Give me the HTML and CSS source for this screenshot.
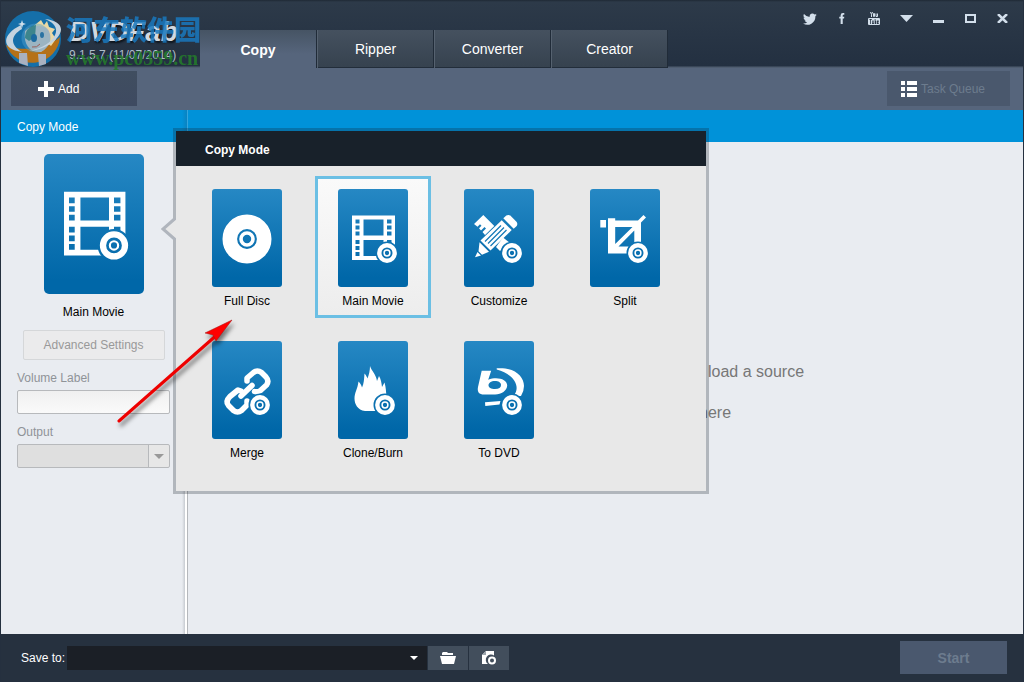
FILE: index.html
```html
<!DOCTYPE html>
<html lang="en">
<head>
<meta charset="utf-8">
<title>DVDFab</title>
<link rel="stylesheet" href="styles.css">
</head>
<body>
<svg class="defs" width="0" height="0" aria-hidden="true">
  <defs>
    <mask id="badge-cut" maskUnits="userSpaceOnUse" x="0" y="0" width="70" height="98">
      <rect width="70" height="98" fill="#fff"/>
      <circle cx="49" cy="64" r="11.5" fill="#000"/>
    </mask>
    <g id="badge" fill="none" stroke="#fff">
      <circle cx="49" cy="64" r="7.7" stroke-width="4.4"/>
      <circle cx="49" cy="64" r="2.900" stroke-width="1.5"/>
    </g>
    <symbol id="i-disc" viewBox="0 0 70 98">
      <g fill="none" stroke="#fff">
        <circle cx="35" cy="50" r="17.2" stroke-width="14.6"/>
        <circle cx="35" cy="50" r="6" stroke-width="3.6"/>
      </g>
    </symbol>
    <symbol id="i-movie" viewBox="0 0 70 98">
      <path mask="url(#badge-cut)" fill="#fff" fill-rule="evenodd" d="M14 26.500h43v44.500H14zM25.500 30.500v16h20v-16zM25.500 51v16h20v-16zM17.500 30.500v4h4v-4zM17.500 36.500v4h4v-4zM17.500 42.500v4h4v-4zM17.500 51v4h4v-4zM17.500 57v4h4v-4zM17.500 63v4h4v-4zM49 30.500v4h4.500v-4zM49 36.500v4h4.500v-4zM49 42.500v4h4.500v-4zM49 51v4h4.500v-4z"/>
      <use href="#badge"/>
    </symbol>
    <symbol id="i-custom" viewBox="0 0 70 98">
      <g transform="translate(-1)">
        <g mask="url(#badge-cut)">
          <path fill="#fff" d="M20.300 26l11 11-9.300 9-2.500-3 3.500-3.500-1.500-1.500-3.500 3.500-2-2.300 2.500-2.500-1.500-1.500-2.500 2.500L11 35z"/>
          <path fill="#fff" d="M40 48.500l7.500 6-10.500 7.500-4-4z"/>
          <path fill="#fff" d="M40.300 29.300l3-2.800q2-1.200 4 0l6.400 6.500q1.200 2 0 4l-3 2.800z"/>
          <path fill="#fff" d="M38.700 31.200l10 9.900L27.500 61.500 17.500 51.500z"/>
          <path fill="#fff" d="M16.500 53.200l9.500 9.500-7 3-3.500-3.500zM14.500 63l3.500 3.500-6 1.700z"/>
          <path fill="none" stroke="#1478b7" stroke-width="1.200" d="M38 36.500L22 52.500M41 38.500L25 54.500M43.500 41L27.500 57"/>
        </g>
        <use href="#badge"/>
      </g>
    </symbol>
    <symbol id="i-split" viewBox="0 0 70 98">
      <g transform="translate(-1)">
        <g mask="url(#badge-cut)" fill="#fff">
          <path d="M11.300 31h5.700v7.500h-5.700z"/>
          <path fill-rule="evenodd" d="M19 29.300h7.200v2.200H52v33H19zM26.200 38v17L43.500 38zM45.300 41.500v16H29.500z"/>
          <path d="M49 31.500l5.500-5.500 2.500 2.500-6 6z"/>
        </g>
        <use href="#badge"/>
      </g>
    </symbol>
    <symbol id="i-merge" viewBox="0 0 70 98">
      <g transform="translate(-1)">
        <g mask="url(#badge-cut)" fill="none" stroke="#fff" stroke-width="5.500" stroke-linejoin="round" stroke-linecap="round">
          <path d="M36 40v-3l6.500-5.500q4-3 8 0l4.500 4.500q3.500 4 .5 8l-6 5.500q-3 2-6 1"/>
          <path d="M30 50l-3-1-8 6.500q-5 5-1.500 9l5 5q4 3 8 0l5.500-5.500v-4"/>
          <path d="M30 55l11-10.500"/>
        </g>
        <use href="#badge"/>
      </g>
    </symbol>
    <symbol id="i-burn" viewBox="0 0 70 98">
      <g transform="translate(-2)">
        <path mask="url(#badge-cut)" fill="#fff" d="M34 25c1.500 5 6 8 7 15l2-5c2 3 2.500 7 3 11l2.500-4.500c1.500 5 1.500 9.500 2 14.500v14H29c-7.500-1-10.500-7-10.500-12.500 0-6 3-9 4-17 2 2 3 4 3.500 6 2-4 2-8 2.500-14 2 2 2.500 4 3 5 1.500-4 2.500-8 2.500-12.500z"/>
        <use href="#badge"/>
      </g>
    </symbol>
    <symbol id="i-todvd" viewBox="0 0 70 98">
      <g transform="translate(-1)">
        <g mask="url(#badge-cut)" fill="#fff">
          <path fill-rule="evenodd" d="M18.700 29.700h9.500l-3 9c9-3.500 19-.5 19 5.800 0 5-6 9-12 9H21c-5 0-7-2.500-6-7.500zM32 40c-4 0-6.500 2-6.500 4.300S28 48 32 48s6-1.500 6-4-2.500-4-6-4z"/>
          <path d="M33.700 27.300C51 26 61 35 61 45q0 5-3 10h-7.500c4-5 4-10 1-15-3-5-9-9-17.800-11.500z"/>
          <path d="M22 61.300l15.500-1.300-1 3.500L22.300 65z"/>
        </g>
        <use href="#badge"/>
      </g>
    </symbol>
  </defs>
</svg>

<div class="window">
  <header class="titlebar">
    <div class="brand">
      <svg class="brand-logo" viewBox="0 0 56 56" aria-hidden="true">
        <circle cx="28" cy="28" r="28" fill="#156fa9"/>
        <path d="M1 34c10 6 38 6 54-8a28 28 0 0 1-54 8z" fill="#b57118"/>
        <path d="M14 42h8l1 13-9-3zM33 43h8v10l-7 2z" fill="#a9b1c0"/>
        <path d="M26 17l10-8 3 5 3-4 2 6 6 2-3 4 4 6-5 7-10-8z" fill="#ead9a4"/>
        <path d="M20 20c6-6 18-7 24-1 3 8 1 17-8 22-10 1-18-6-16-21z" fill="#d9c5b8"/>
        <circle cx="31" cy="27" r="14.500" fill="#4f9fcf" opacity=".45"/>
        <path d="M20 27c0-7 4-12 11-13l-1 12-6 4z" fill="#2c7d84" opacity=".85"/>
        <ellipse cx="29" cy="27" rx="3" ry="4" fill="#1b6aa0"/><ellipse cx="37" cy="24" rx="2" ry="3" fill="#2a72a2"/>
        <path d="M27 36q5 1 8-3" fill="none" stroke="#9c5d58"/>
        <path d="M16 14C-4 24-4 38 17 41 5 34 5 25 17 18zM40 8c16 2 20 10 12 19-6 7-16 12-28 13 14-3 23-9 26-16 3-6 0-12-10-16z" fill="#c4d3df"/>
        <path d="M17 9l1 3 3 1-3 1-1 3-1-3-3-1 3-1z" fill="#cfe0ec"/>
      </svg>
      <div class="brand-text">
        <div class="brand-name">DVDFab</div>
        <div class="brand-version">9.1.5.7 (11/07/2014)</div>
      </div>
      <div class="watermark">
        <div class="watermark-name" lang="zh">河东软件园</div>
        <div class="watermark-url">www.pc0359.cn</div>
      </div>
    </div>
    <nav class="tabs">
      <button class="tab tab-active">Copy</button>
      <button class="tab">Ripper</button>
      <button class="tab">Converter</button>
      <button class="tab">Creator</button>
    </nav>
    <div class="controls">
      <button class="control" aria-label="Twitter"><svg width="14" height="14" viewBox="0 0 24 24"><path fill="currentColor" d="M23.600 4.900a9.700 9.700 0 0 1-2.800.8 4.900 4.900 0 0 0 2.100-2.700 9.700 9.700 0 0 1-3.100 1.200 4.850 4.850 0 0 0-8.300 4.400A13.700 13.700 0 0 1 1.700 3.500a4.850 4.850 0 0 0 1.500 6.500 4.800 4.800 0 0 1-2.200-.6c0 2.300 1.600 4.400 3.900 4.800a4.900 4.900 0 0 1-2.200.1 4.850 4.850 0 0 0 4.500 3.400A9.700 9.700 0 0 1 0 19.700 13.800 13.800 0 0 0 21.200 7.400a9.800 9.800 0 0 0 2.400-2.500z"/></svg></button>
      <button class="control" aria-label="Facebook"><svg width="6" height="11" viewBox="0 0 6 12"><path fill="currentColor" d="M1.500 12V6H0V4h1.500V2.500Q1.500 0 4 0h1.500v2H4.400q-.6 0-.6.700V4h1.700L5.200 6H3.800v6z"/></svg></button>
      <button class="control" aria-label="YouTube"><svg width="12" height="14" viewBox="0 0 12 14"><path fill="none" stroke="currentColor" d="M2.500 0l1 2.500V5M4.500 0l-1 2.500M5.500 1.500h1v3h-1zM8 1.500v3h1.500v-3"/><path fill="currentColor" fill-rule="evenodd" d="M1 6h10q1 0 1 1v5q0 1-1 1H1q-1 0-1-1V7q0-1 1-1zM1.500 7v1h.7v4h.8V8h.7V7zM4 8.500V12h2V8.500h-.6v2.700h-.7V8.500zM6.700 7v5h1.600V8.700h-.8V7zM9 8.500V12h1.700v-1H9.800v-.5h.9v-2z"/></svg></button>
      <button class="control" aria-label="Menu"><svg width="13" height="7" viewBox="0 0 13 7"><path fill="currentColor" d="M0 0h13L6.500 7z"/></svg></button>
      <button class="control control-min" aria-label="Minimize"><svg width="11" height="3" viewBox="0 0 11 3"><path fill="currentColor" d="M0 0h11v3H0z"/></svg></button>
      <button class="control" aria-label="Maximize"><svg width="11" height="9" viewBox="0 0 11 9"><path fill="none" stroke="currentColor" stroke-width="2" d="M1 1h9v7H1z"/></svg></button>
      <button class="control" aria-label="Close"><svg width="11" height="9" viewBox="0 0 11 9"><path fill="none" stroke="currentColor" stroke-width="2.500" d="M1 0l9 9M10 0L1 9"/></svg></button>
    </div>
  </header>

  <div class="toolbar">
    <button class="tool tool-add"><svg width="16" height="16" viewBox="0 0 16 16"><path fill="#fff" d="M6 0h4v6h6v4h-6v6H6v-6H0V6h6z"/></svg>Add</button>
    <button class="tool tool-queue" disabled><svg width="16" height="16" viewBox="0 0 16 16"><path fill="#fff" d="M0 0h4v4H0zM6 0h10v4H6zM0 6h4v4H0zM6 6h10v4H6zM0 12h4v4H0zM6 12h10v4H6z"/></svg>Task Queue</button>
  </div>

  <div class="workspace">
    <aside class="sidebar">
      <h2 class="band">Copy Mode</h2>
      <div class="sidebar-body">
        <button class="mode-current">
          <svg class="mode-tile" viewBox="0 0 70 98"><use href="#i-movie"/></svg>
          <span>Main Movie</span>
        </button>
        <button class="advanced" disabled>Advanced Settings</button>
        <label class="field-label" for="volume">Volume Label</label>
        <input class="field" id="volume" type="text" disabled>
        <label class="field-label" for="output">Output</label>
        <div class="combo">
          <select class="field field-select" id="output" disabled></select>
        </div>
      </div>
    </aside>
    <main class="content">
      <div class="band"></div>
      <div class="hint">
        <p class="hint-load">load a source</p>
        <p class="hint-drag">here</p>
      </div>
    </main>

    <section class="popup">
      <svg class="popup-pointer" width="15" height="24" viewBox="0 0 15 24" aria-hidden="true"><path fill="#e8e8e8" d="M15 2L2 12l13 10z"/><path fill="none" stroke="#b0b5bd" stroke-width="3" d="M13.500 1v1L2 12l11.500 10v1"/></svg>
      <h2 class="popup-title">Copy Mode</h2>
      <div class="modes">
        <button class="mode"><svg class="tile" viewBox="0 0 70 98"><use href="#i-disc"/></svg><span>Full Disc</span></button>
        <button class="mode mode-selected"><svg class="tile" viewBox="0 0 70 98"><use href="#i-movie"/></svg><span>Main Movie</span></button>
        <button class="mode"><svg class="tile" viewBox="0 0 70 98"><use href="#i-custom"/></svg><span>Customize</span></button>
        <button class="mode"><svg class="tile" viewBox="0 0 70 98"><use href="#i-split"/></svg><span>Split</span></button>
        <button class="mode"><svg class="tile" viewBox="0 0 70 98"><use href="#i-merge"/></svg><span>Merge</span></button>
        <button class="mode"><svg class="tile" viewBox="0 0 70 98"><use href="#i-burn"/></svg><span>Clone/Burn</span></button>
        <button class="mode"><svg class="tile" viewBox="0 0 70 98"><use href="#i-todvd"/></svg><span>To DVD</span></button>
      </div>
    </section>
    <svg class="callout" width="130" height="120" viewBox="0 0 130 120" aria-hidden="true"><path fill="none" stroke="#e00" stroke-width="3" stroke-linecap="round" d="M4 105L104 17"/><path fill="#f00" stroke="#a01010" stroke-width=".5" d="M117 4L101 25l-3-6-8-2z"/></svg>
  </div>

  <footer class="footer">
    <label class="save-label" for="save">Save to:</label>
    <div class="save-combo"><select class="save-select" id="save"></select></div>
    <button class="save-button" aria-label="Open folder"><svg width="16" height="14" viewBox="0 0 16 14"><path fill="#fff" d="M3 1h4l1 1h5v2H2V2zM0 5h16l-2 8H2z"/></svg></button>
    <button class="save-button" aria-label="Save as image"><svg width="15" height="14" viewBox="0 0 15 14"><path fill="#fff" d="M4 0h8v4.500A5 5 0 0 0 6 13H0V4z"/><path fill="#9ca5ad" d="M0 4l4-4v4z"/><circle cx="10" cy="9.500" r="3" fill="none" stroke="#fff" stroke-width="2"/></svg></button>
    <button class="start" disabled>Start</button>
  </footer>
</div>
</body>
</html>
```

FILE: styles.css
```css
* { box-sizing: border-box; }
body { margin: 0; font: 12px/16px "Liberation Sans", Arial, sans-serif; color: #000; }
button, input, select { font: inherit; color: inherit; border: 0; padding: 0; margin: 0; border-radius: 0; background: none; }
h2, p { margin: 0; }
svg { display: block; flex: none; }
.defs { position: absolute; }

.window { display: flex; flex-direction: column; min-height: 100vh; background: #e9ecf1; border: solid #25303f; border-width: 0 1px 1px; }

.titlebar { display: flex; min-height: 68px; background: linear-gradient(#1f2935 0, #2d3a49 2px, #233041 66px, #4f5d70 67px); }
.brand { position: relative; display: flex; gap: 8px; width: 199px; padding: 11px 0 0 4px; }
.brand-logo { width: 56px; height: 56px; }
.brand-text { padding-top: 5px; }
.brand-name { font-size: 28px; line-height: 32px; font-weight: bold; font-style: italic; color: #d3d8de; text-shadow: 1px 2px 2px #0d141c; }
.brand-version { color: #aebdca; line-height: 14px; white-space: nowrap; }
.watermark { position: absolute; left: 65px; top: 11px; white-space: nowrap; }
.watermark-name { font: 900 27px/36px "Noto Sans CJK SC", sans-serif; color: #1978be; opacity: .85; }
.watermark-url { font: bold 20px/22px "Liberation Serif", serif; color: #247d2b; opacity: .85; }

.tabs { display: flex; padding-top: 30px; }
.tab { width: 117px; padding-bottom: 1px; font-size: 14px; color: #fff; background: linear-gradient(#45515f, #36424f 37px, #222d3a 37px); border-left: 1px solid #566270; border-right: 1px solid #202b38; }
.tab-active { padding: 2px 0 0; font-weight: bold; background: linear-gradient(#465464, #56657c 24px); border-left: 0; }

.controls { display: flex; margin-left: auto; padding-right: 5px; height: 37px; color: #d3dfeb; }
.control { display: flex; align-items: center; justify-content: center; width: 32px; }
.control-min { padding-top: 6px; }

.toolbar { display: flex; justify-content: space-between; padding: 3px 13px 4px 10px; background: #56657c; }
.tool { display: flex; align-items: center; height: 35px; }
.tool-add { gap: 4px; width: 126px; padding-left: 27px; color: #fff; background: linear-gradient(#404e60, #3e4a61); }
.tool-queue { gap: 4px; width: 123px; padding-left: 14px; color: #6d7c8e; background: #4a586d; }

.workspace { position: relative; display: flex; flex: 1; }
.sidebar { width: 187px; border-right: 1px solid #b5b8bc; background: linear-gradient(90deg, transparent 181px, #c7cbd1 184px, #fff 184px); }
.band { min-height: 32px; padding: 9px 16px 7px; font-size: 12px; font-weight: normal; color: #fff; background: #0092d9; }
.sidebar .band { margin-right: -1px; border-right: 1px solid #35a6dd; background: linear-gradient(90deg, #0092d9 181px, #0a82c0 186px); }
.sidebar-body { display: flex; flex-direction: column; padding: 12px 17px 0 16px; }
.mode-current { display: flex; flex-direction: column; align-items: center; gap: 10px; }
.mode-tile { width: 100px; height: 140px; border-radius: 5px; background: linear-gradient(#2688c4, #0067a8 90%); }
.advanced { align-self: center; width: 142px; height: 30px; margin-top: 10px; color: #999; background: #ebebec; border: 1px solid #d5d7d9; border-radius: 2px; }
.field-label { margin: 10px 0 4px; color: #8f9398; }
.field { width: 100%; height: 24px; border: 1px solid #b7b9bc; border-radius: 2px; background: linear-gradient(#f0f0f0, #fafafa); }
.field-select { display: block; appearance: none; background: linear-gradient(90deg, #dfdfdf 130px, #b7b9bc 130px, #b7b9bc 131px, #e7e7e7 131px); opacity: 1; }
.combo, .save-combo { position: relative; }
.combo::after, .save-combo::after { content: ""; position: absolute; border: solid transparent; border-top-color: #999; border-width: 5px 5px 0; right: 6px; top: 10px; }

.content { flex: 1; }
.hint { padding: 221px 0 0 520px; font-size: 16px; line-height: 18px; color: #777; }
.hint-drag { margin: 23px 0 0 -9px; }

.popup { position: absolute; left: 172px; top: 18px; border: 3px solid rgba(20, 28, 38, .26); background: #e8e8e8; background-clip: padding-box; }
.popup-pointer { position: absolute; left: -15px; top: 86px; }
.popup-title { padding: 11px 29px 8px; font-size: 12px; color: #fff; background: #18212a; }
.modes { display: grid; grid-template-columns: repeat(4, 116px); gap: 10px; padding: 10px 23px 21px 13px; }
.mode { display: flex; flex-direction: column; align-items: center; gap: 6px; padding: 10px 0 6px; border: 3px solid transparent; }
.mode-selected { border-color: #6bbfe4; background: linear-gradient(#fafafa, #ededed); }
.tile { width: 70px; height: 98px; border-radius: 3px; background: linear-gradient(#2688c4, #0067a8 90%); }
.callout { position: absolute; left: 114px; top: 206px; pointer-events: none; filter: drop-shadow(2px 4px 2px rgba(0, 0, 0, .5)); }

.footer { display: flex; align-items: center; padding: 0 16px 0 20px; height: 47px; background: #26313f; color: #fff; }
.save-label { width: 46px; white-space: nowrap; }
.save-combo { width: 360px; }
.save-select { display: block; appearance: none; width: 100%; height: 24px; background: #1b1f26; }
.save-combo::after { border-top-color: #fff; border-width: 4px 4px 0; right: 9px; }
.save-button { display: flex; align-items: center; justify-content: center; width: 40px; height: 24px; margin-left: 1px; background: #424e5c; }
.start { width: 107px; height: 33px; margin-left: auto; font-size: 14px; font-weight: bold; color: #6d7c8e; background: #4a586e; }
```
